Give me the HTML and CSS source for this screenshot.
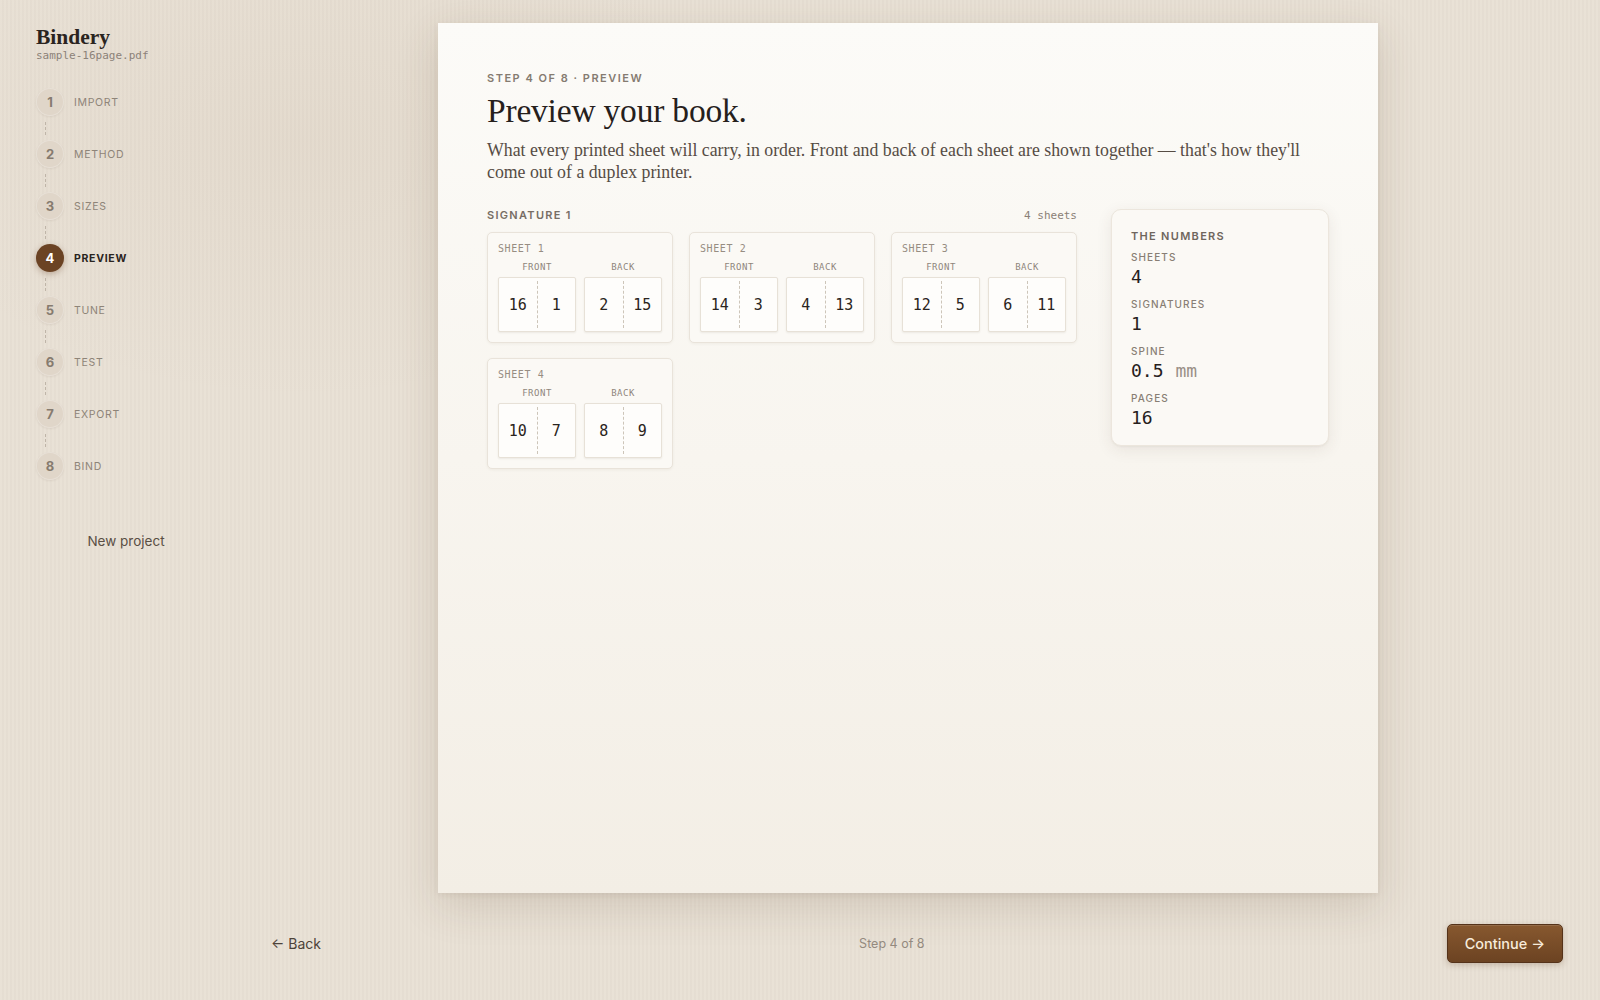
FILE: index.html
```html
<!DOCTYPE html>
<html lang="en">
<head>
    <meta charset="UTF-8">
    <meta name="viewport" content="width=device-width, initial-scale=1.0">
    <title>Bindery - Preview</title>
    <link rel="stylesheet" href="styles.css">
</head>
<body>
    <div class="app">
        <!-- Sidebar -->
        <aside class="sidebar">
            <div class="brand">Bindery</div>
            <div class="file-name">sample-16page.pdf</div>

            <ol class="steps">
                <li class="step"><span class="step-num">1</span><span class="step-label">Import</span></li>
                <li class="rail"><span></span></li>
                <li class="step"><span class="step-num">2</span><span class="step-label">Method</span></li>
                <li class="rail"><span></span></li>
                <li class="step"><span class="step-num">3</span><span class="step-label">Sizes</span></li>
                <li class="rail"><span></span></li>
                <li class="step active"><span class="step-num">4</span><span class="step-label">Preview</span></li>
                <li class="rail"><span></span></li>
                <li class="step"><span class="step-num">5</span><span class="step-label">Tune</span></li>
                <li class="rail"><span></span></li>
                <li class="step"><span class="step-num">6</span><span class="step-label">Test</span></li>
                <li class="rail"><span></span></li>
                <li class="step"><span class="step-num">7</span><span class="step-label">Export</span></li>
                <li class="rail"><span></span></li>
                <li class="step"><span class="step-num">8</span><span class="step-label">Bind</span></li>
            </ol>

            <button class="new-project">New project</button>
        </aside>

        <!-- Main -->
        <main class="main">
            <section class="page">
                <div class="eyebrow">Step 4 of 8 · Preview</div>
                <h1>Preview your book.</h1>
                <p class="lede">What every printed sheet will carry, in order. Front and back of each sheet are shown together — that's how they'll come out of a duplex printer.</p>

                <div class="preview">
                    <div class="signature">
                        <div class="sig-head">
                            <span class="sig-title">Signature 1</span>
                            <span class="sig-count">4 sheets</span>
                        </div>
                        <div class="sheets">
                            <div class="sheet">
                                <div class="sheet-label">SHEET 1</div>
                                <div class="faces">
                                    <div class="face">
                                        <div class="face-label">FRONT</div>
                                        <div class="spread"><span>16</span><i></i><span>1</span></div>
                                    </div>
                                    <div class="face">
                                        <div class="face-label">BACK</div>
                                        <div class="spread"><span>2</span><i></i><span>15</span></div>
                                    </div>
                                </div>
                            </div>
                            <div class="sheet">
                                <div class="sheet-label">SHEET 2</div>
                                <div class="faces">
                                    <div class="face">
                                        <div class="face-label">FRONT</div>
                                        <div class="spread"><span>14</span><i></i><span>3</span></div>
                                    </div>
                                    <div class="face">
                                        <div class="face-label">BACK</div>
                                        <div class="spread"><span>4</span><i></i><span>13</span></div>
                                    </div>
                                </div>
                            </div>
                            <div class="sheet">
                                <div class="sheet-label">SHEET 3</div>
                                <div class="faces">
                                    <div class="face">
                                        <div class="face-label">FRONT</div>
                                        <div class="spread"><span>12</span><i></i><span>5</span></div>
                                    </div>
                                    <div class="face">
                                        <div class="face-label">BACK</div>
                                        <div class="spread"><span>6</span><i></i><span>11</span></div>
                                    </div>
                                </div>
                            </div>
                            <div class="sheet">
                                <div class="sheet-label">SHEET 4</div>
                                <div class="faces">
                                    <div class="face">
                                        <div class="face-label">FRONT</div>
                                        <div class="spread"><span>10</span><i></i><span>7</span></div>
                                    </div>
                                    <div class="face">
                                        <div class="face-label">BACK</div>
                                        <div class="spread"><span>8</span><i></i><span>9</span></div>
                                    </div>
                                </div>
                            </div>
                        </div>
                    </div>

                    <div class="numbers">
                        <div class="numbers-title">The numbers</div>
                        <div class="stat">
                            <div class="stat-label">Sheets</div>
                            <div class="stat-value">4</div>
                        </div>
                        <div class="stat">
                            <div class="stat-label">Signatures</div>
                            <div class="stat-value">1</div>
                        </div>
                        <div class="stat">
                            <div class="stat-label">Spine</div>
                            <div class="stat-value">0.5<span class="unit">mm</span></div>
                        </div>
                        <div class="stat">
                            <div class="stat-label">Pages</div>
                            <div class="stat-value">16</div>
                        </div>
                    </div>
                </div>
            </section>

            <footer class="nav">
                <button class="back">&larr; Back</button>
                <span class="nav-step">Step 4 of 8</span>
                <button class="continue">Continue &rarr;</button>
            </footer>
        </main>
    </div>
</body>
</html>
```

FILE: styles.css
```css
/* Base */
* { box-sizing: border-box; }

html, body {
    margin: 0;
    padding: 0;
    height: 100%;
}

body {
    font-family: Inter, "Noto Sans", sans-serif;
    color: #2a2420;
    background-color: #e8e0d4;
    background-image:
        radial-gradient(ellipse 420px 260px at 300px 140px, rgba(160, 130, 100, 0.07), transparent),
        repeating-linear-gradient(90deg, rgba(255, 255, 255, 0.05) 0 2px, rgba(0, 0, 0, 0.01) 2px 4px);
}

.app {
    display: flex;
    min-height: 100vh;
}

/* Sidebar */
.sidebar {
    width: 216px;
    flex-shrink: 0;
    padding: 25px 0 0 36px;
}

.brand {
    font-family: "Liberation Serif", serif;
    font-weight: bold;
    font-size: 21.5px;
    line-height: 24px;
    color: #2a2420;
}

.file-name {
    font-family: "DejaVu Sans Mono", monospace;
    font-size: 11px;
    line-height: 13px;
    color: #8c8279;
}

.steps {
    list-style: none;
    margin: 26px 0 0;
    padding: 0;
}

.step {
    display: flex;
    align-items: center;
    gap: 10px;
    height: 28px;
}

.step-num {
    width: 28px;
    height: 28px;
    border-radius: 50%;
    display: flex;
    align-items: center;
    justify-content: center;
    font-size: 13px;
    font-weight: 700;
    color: #867b6f;
    background: #e0d6c9;
    box-shadow: 0 1px 2px rgba(90, 70, 50, 0.08), inset 0 0 0 1px rgba(255, 255, 255, 0.25);
}

.step-label {
    font-size: 10.5px;
    letter-spacing: 0.7px;
    text-transform: uppercase;
    color: #8e8478;
}

.step.active .step-num {
    background: #6b4324;
    color: #fff;
    box-shadow: 0 2px 6px rgba(107, 67, 36, 0.35);
}

.step.active .step-label {
    color: #2a2420;
    font-weight: 700;
}

.rail {
    height: 24px;
    padding: 6px 0 0 9px;
}

.rail span {
    display: block;
    width: 0;
    height: 13px;
    border-left: 1px dashed #bfb5a8;
}

.new-project {
    display: block;
    width: 100%;
    margin-top: 45px;
    padding: 8px 0;
    background: none;
    border: none;
    font-family: Inter, sans-serif;
    font-size: 13.5px;
    color: #5a4f45;
    text-align: center;
    cursor: pointer;
}

/* Main */
.main {
    flex: 1;
    display: flex;
    flex-direction: column;
}

.page {
    width: 940px;
    height: 870px;
    margin: 23px auto 0;
    padding: 47px 49px 48px;
    background: linear-gradient(180deg, #fcfbf8 0%, #f8f5ef 50%, #f3eee5 100%);
    box-shadow: 0 12px 40px rgba(90, 65, 40, 0.16), 0 2px 6px rgba(90, 65, 40, 0.08);
}

.eyebrow {
    font-size: 11px;
    line-height: 16px;
    font-weight: 600;
    letter-spacing: 1.5px;
    text-transform: uppercase;
    color: #857b71;
}

h1 {
    margin: 6px 0 0;
    font-family: "Liberation Serif", serif;
    font-weight: normal;
    font-size: 33.5px;
    line-height: 38px;
    letter-spacing: -0.2px;
    color: #26201c;
}

.lede {
    margin: 9px 0 0;
    max-width: 830px;
    font-family: "Liberation Serif", serif;
    font-size: 17.8px;
    line-height: 22px;
    color: #564c44;
}

.preview {
    display: grid;
    grid-template-columns: 1fr 218px;
    gap: 34px;
    align-items: start;
    margin-top: 25px;
}

.sig-head {
    display: flex;
    justify-content: space-between;
    align-items: center;
    height: 14px;
}

.sig-title {
    font-size: 11px;
    font-weight: 600;
    letter-spacing: 1.3px;
    text-transform: uppercase;
    color: #776d64;
}

.sig-count {
    font-family: "DejaVu Sans Mono", monospace;
    font-size: 11px;
    color: #8a8076;
}

.sheets {
    display: grid;
    grid-template-columns: repeat(3, 186px);
    column-gap: 16px;
    row-gap: 15px;
    margin-top: 10px;
}

.sheet {
    background: #fbf9f5;
    border: 1px solid #e9e3da;
    border-radius: 5px;
    padding: 10px;
    box-shadow: 0 1px 3px rgba(80, 60, 40, 0.06);
}

.sheet-label {
    font-family: "DejaVu Sans Mono", monospace;
    font-size: 10px;
    line-height: 11px;
    letter-spacing: 0.6px;
    color: #978d82;
}

.faces {
    display: flex;
    gap: 8px;
    margin-top: 8px;
}

.face { flex: 1; }

.face-label {
    font-family: "DejaVu Sans Mono", monospace;
    font-size: 9px;
    line-height: 11px;
    letter-spacing: 0.5px;
    text-align: center;
    color: #8f867c;
}

.spread {
    display: flex;
    height: 55px;
    margin-top: 4px;
    background: #fefdfb;
    border: 1px solid #e7e1d7;
    border-radius: 2px;
    box-shadow: 0 1px 2px rgba(70, 50, 30, 0.08);
}

.spread span {
    flex: 1;
    display: flex;
    align-items: center;
    justify-content: center;
    font-family: "DejaVu Sans Mono", monospace;
    font-size: 15px;
    color: #2a2420;
}

.spread i {
    width: 0;
    margin: 3px 0;
    border-left: 1px dashed #cdc5b9;
}

/* Numbers card */
.numbers {
    margin-top: 1px;
    background: #fbf9f5;
    border: 1px solid #ece6dd;
    border-radius: 10px;
    padding: 19px 20px 16px 19px;
    box-shadow: 0 4px 16px rgba(80, 60, 40, 0.09), 0 1px 2px rgba(80, 60, 40, 0.05);
}

.numbers-title {
    font-size: 11px;
    line-height: 14px;
    font-weight: 600;
    letter-spacing: 1.3px;
    text-transform: uppercase;
    color: #6f665d;
    margin-bottom: 8px;
}

.stat { margin-bottom: 10px; }
.stat:last-child { margin-bottom: 0; }

.stat-label {
    font-size: 10px;
    line-height: 13px;
    font-weight: 500;
    letter-spacing: 1.1px;
    text-transform: uppercase;
    color: #887e74;
}

.stat-value {
    margin-top: 2px;
    font-family: "DejaVu Sans Mono", monospace;
    font-size: 18px;
    line-height: 22px;
    color: #26201c;
}

.unit {
    margin-left: 12px;
    color: #9a9087;
}

/* Footer nav */
.nav {
    height: 107px;
    display: flex;
    align-items: center;
    justify-content: space-between;
    padding: 0 37px 7px 41px;
}

.back {
    padding: 8px 16px 8px 14px;
    background: none;
    border: none;
    font-family: Inter, sans-serif;
    font-size: 14px;
    color: #4d433a;
    cursor: pointer;
}

.nav-step {
    font-size: 12.5px;
    color: #948a7f;
}

.continue {
    height: 39px;
    padding: 0 17px;
    border: 1px solid #55331a;
    border-radius: 5px;
    background: linear-gradient(180deg, #87582f 0%, #6c4322 100%);
    font-family: Inter, sans-serif;
    font-size: 14.5px;
    font-weight: 500;
    color: #f7ebdb;
    box-shadow: 0 2px 6px rgba(90, 55, 25, 0.25), inset 0 1px 0 rgba(255, 255, 255, 0.12);
    cursor: pointer;
}
```
